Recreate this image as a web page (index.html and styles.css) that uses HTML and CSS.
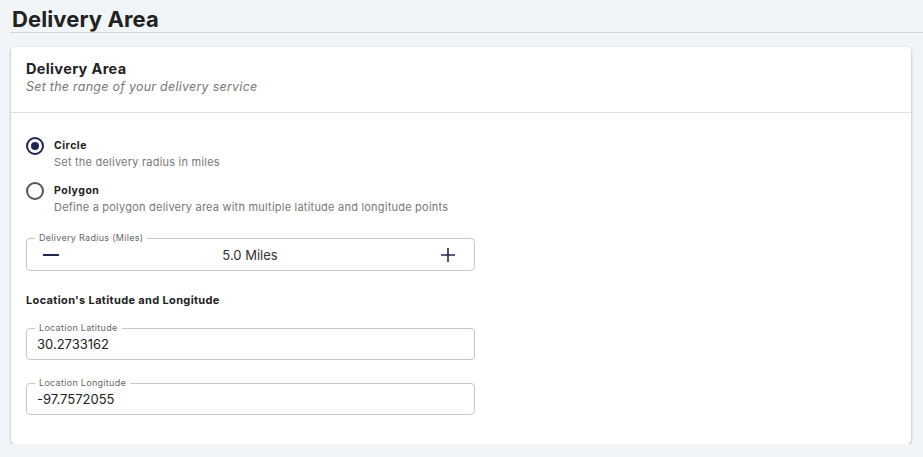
FILE: index.html
```html
<!DOCTYPE html>
<html lang="en">
<head>
<meta charset="utf-8">
<title>Delivery Area</title>
<link rel="stylesheet" href="styles.css">
</head>
<body>
<header class="page-head">
  <h1 class="page-title">Delivery Area</h1>
</header>
<section class="card">
  <div class="card-head">
    <h2 class="card-title">Delivery Area</h2>
    <p class="card-sub">Set the range of your delivery service</p>
  </div>
  <div class="card-body">
    <div class="options">
      <label class="option">
        <span class="radio checked"><span class="dot"></span></span>
        <span class="opt-text">
          <span class="opt-title">Circle</span>
          <span class="opt-desc">Set the delivery radius in miles</span>
        </span>
      </label>
      <label class="option">
        <span class="radio"></span>
        <span class="opt-text">
          <span class="opt-title">Polygon</span>
          <span class="opt-desc">Define a polygon delivery area with multiple latitude and longitude points</span>
        </span>
      </label>
    </div>

    <div class="field stepper">
      <span class="field-label">Delivery Radius (Miles)</span>
      <button class="step-btn" aria-label="decrease">
        <svg width="18" height="18" viewBox="0 0 18 18"><path d="M1 9h16" stroke="#1f2654" stroke-width="2"/></svg>
      </button>
      <span class="step-value">5.0 Miles</span>
      <button class="step-btn" aria-label="increase">
        <svg width="16" height="16" viewBox="0 0 16 16"><path d="M1 8h14M8 1v14" stroke="#1f2654" stroke-width="1.6"/></svg>
      </button>
    </div>

    <h3 class="section-title">Location's Latitude and Longitude</h3>

    <div class="field text-field">
      <span class="field-label">Location Latitude</span>
      <span class="field-value">30.2733162</span>
    </div>

    <div class="field text-field lon">
      <span class="field-label">Location Longitude</span>
      <span class="field-value">-97.7572055</span>
    </div>
  </div>
</section>
</body>
</html>
```

FILE: styles.css
```css
* { box-sizing: border-box; }
body {
  margin: 0;
  background: #f2f5f8;
  font-family: "Inter", "Liberation Sans", sans-serif;
  color: #222;
}
.page-head {
  margin-left: 10px;
  height: 33px;
  border-bottom: 1px solid #d3d7db;
  padding-left: 2px;
}
.page-title {
  margin: 0;
  font-size: 22px;
  font-weight: 700;
  line-height: 38px;
  letter-spacing: 0.1px;
  color: #222;
}
.card {
  margin: 14px 0 0 11px;
  width: 900px;
  background: #fff;
  border-radius: 4px;
  box-shadow: 0 1px 3px rgba(0,0,0,0.3), 0 1px 1px rgba(0,0,0,0.1);
}
.card-head {
  height: 66px;
  padding: 13px 15px 0;
  border-bottom: 1px solid #e0e0e0;
}
.card-title {
  margin: 0;
  font-size: 14.5px;
  font-weight: 700;
  line-height: 18px;
  letter-spacing: 0.35px;
  color: #222;
}
.card-sub {
  margin: 0;
  font-size: 12.5px;
  font-style: italic;
  line-height: 18px;
  letter-spacing: 0.25px;
  color: #777;
}
.card-body {
  padding: 24px 15px 29px;
}
.options {
  display: flex;
  flex-direction: column;
  gap: 13px;
}
.option {
  display: flex;
  align-items: flex-start;
  gap: 10px;
}
.radio {
  width: 18px;
  height: 18px;
  border-radius: 50%;
  border: 2px solid #555;
  display: flex;
  align-items: center;
  justify-content: center;
  flex: none;
}
.radio.checked { border-color: #1f2654; }
.dot {
  width: 8px;
  height: 8px;
  border-radius: 50%;
  background: #1f2654;
}
.opt-text {
  display: flex;
  flex-direction: column;
  padding-top: 1px;
  margin-bottom: -1px;
}
.opt-title {
  font-size: 10.5px;
  font-weight: 700;
  line-height: 16px;
  letter-spacing: 0.5px;
  color: #222;
}
.opt-desc {
  font-size: 11px;
  line-height: 16px;
  letter-spacing: 0.22px;
  color: #777;
}
.field {
  position: relative;
  width: 449px;
  border: 1px solid #c6c6c6;
  border-radius: 4px;
  display: flex;
  align-items: center;
}
.field-label {
  position: absolute;
  left: 8px;
  top: -6px;
  padding: 0 4px;
  background: #fff;
  font-size: 9px;
  line-height: 10px;
  letter-spacing: 0.3px;
  color: #666;
}
.stepper {
  margin-top: 24px;
  height: 33px;
  justify-content: space-between;
  padding: 0 18px 0 15px;
}
.step-btn {
  border: 0;
  background: none;
  padding: 0;
  display: flex;
  align-items: center;
}
.step-value {
  font-size: 13px;
  color: #333;
}
.section-title {
  margin: 21px 0 20px;
  font-size: 11px;
  font-weight: 700;
  line-height: 16px;
  letter-spacing: 0.35px;
  color: #222;
}
.text-field {
  height: 32px;
  padding: 0 10px;
}
.text-field.lon { margin-top: 23px; }
.field-value {
  font-size: 13px;
  color: #222;
}
```
